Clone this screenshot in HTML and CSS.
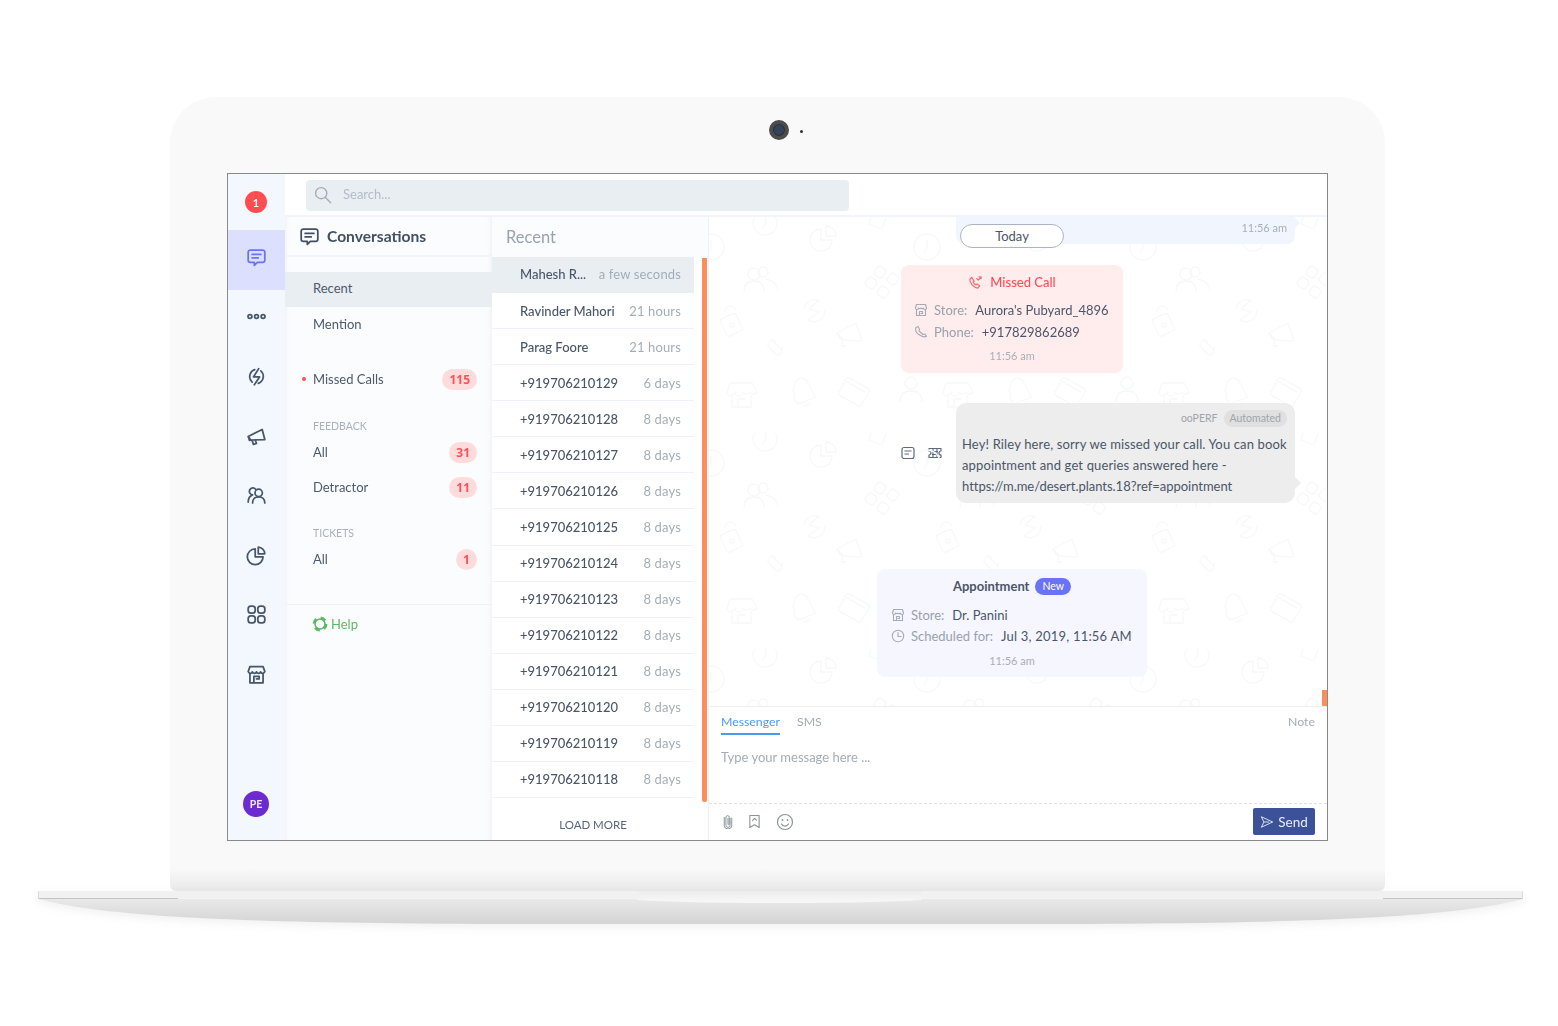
FILE: index.html
```html
<!DOCTYPE html>
<html lang="en">
<head>
<meta charset="utf-8">
<title>Conversations</title>
<link rel="stylesheet" href="styles.css">
</head>
<body>
<div class="laptop">
  <div class="lid">
    <div class="camera-bar"><span class="camera"></span><span class="camera-dot"></span></div>
    <div class="screen">
      <nav class="rail">
        <div class="rail-top"><span class="alert">1</span></div>
        <div class="rail-item active"><svg class="ri" viewBox="0 0 24 24"><path d="M5 3.500h14a2.500 2.500 0 0 1 2.500 2.500v9a2.500 2.500 0 0 1-2.500 2.500h-6l-3.500 3.500v-3.500H5A2.500 2.500 0 0 1 2.500 15V6A2.500 2.500 0 0 1 5 3.500zM7 8.500h10M7 12.500h7"/></svg></div>
        <div class="rail-item"><svg class="ri" viewBox="0 0 24 24"><circle cx="4.500" cy="12" r="2.200"/><circle cx="12" cy="12" r="2.200"/><circle cx="19.500" cy="12" r="2.200"/></svg></div>
        <div class="rail-item"><svg class="ri" viewBox="0 0 24 24"><path d="M7 18.500A8.500 8.500 0 0 1 10 4.200M17 5.500a8.500 8.500 0 0 1-3 14.300M14.500 3l-6 9.500h7l-6 9"/></svg></div>
        <div class="rail-item"><svg class="ri" viewBox="0 0 24 24"><path d="M2.500 12L18.500 4l3 11.500-16 .5zM2.500 12l1.500 4.500 2-.5M7 16.500l1.500 4.500 3.500-1-1.500-4"/></svg></div>
        <div class="rail-item"><svg class="ri" viewBox="0 0 24 24"><circle cx="14.500" cy="9" r="4.200"/><path d="M11 4.800a4 4 0 1 0-3.500 6.500C4.500 12.500 2.500 15.500 2.500 19.500M7.500 20.500c0-4.500 3-7 7-7s7 2.500 7 7"/></svg></div>
        <div class="rail-item"><svg class="ri" viewBox="0 0 24 24"><path d="M10.500 4.500a9 9 0 1 0 9 9h-9zM14 2.500a8 8 0 0 1 7.500 7.500H14z"/></svg></div>
        <div class="rail-item"><svg class="ri" viewBox="0 0 24 24"><rect x="2.500" y="2.500" width="8" height="8" rx="3"/><rect x="13.500" y="2.500" width="8" height="8" rx="3"/><rect x="2.500" y="13.500" width="8" height="8" rx="3"/><rect x="13.500" y="13.500" width="8" height="8" rx="3"/></svg></div>
        <div class="rail-item"><svg class="ri" viewBox="0 0 24 24"><path d="M4.500 3h15l2 5.500a2.500 2.500 0 0 1-4.800.5 2.500 2.500 0 0 1-4.700 0 2.500 2.500 0 0 1-4.700 0 2.500 2.500 0 0 1-4.800-.5zM4.500 11v10.500h15V11M9 21.500V14h6v3h-3"/></svg></div>
        <div class="rail-spacer"></div>
        <span class="avatar">PE</span>
      </nav>
      <div class="workspace">
        <header class="topbar">
          <div class="search">
            <svg class="search-icon" viewBox="0 0 20 20"><circle cx="8" cy="8" r="6.200"/><path d="M12.500 12.500l6 6"/></svg>
            <span class="search-text">Search...</span>
          </div>
        </header>
        <div class="columns">
          <aside class="conv">
            <div class="conv-head">
              <svg class="conv-icon" viewBox="0 0 24 24"><path d="M5 3.500h14a2.500 2.500 0 0 1 2.500 2.500v9a2.500 2.500 0 0 1-2.500 2.500h-6l-3.500 3.500v-3.500H5A2.500 2.500 0 0 1 2.500 15V6A2.500 2.500 0 0 1 5 3.500zM7 8.500h10M7 12.500h7"/></svg>
              <span>Conversations</span>
            </div>
            <div class="nav-group">
              <div class="nav-row selected">Recent</div>
              <div class="nav-row">Mention</div>
            </div>
            <div class="nav-row missed"><span class="red-dot"></span>Missed Calls<span class="count">115</span></div>
            <div class="nav-label">FEEDBACK</div>
            <div class="nav-row">All<span class="count">31</span></div>
            <div class="nav-row">Detractor<span class="count">11</span></div>
            <div class="nav-label tickets">TICKETS</div>
            <div class="nav-row">All<span class="count single">1</span></div>
            <div class="help">
              <svg class="help-icon" viewBox="0 0 16 16"><circle cx="8" cy="8" r="5" /><circle class="help-dash" cx="8" cy="8" r="6"/></svg>
              Help
            </div>
          </aside>
          <section class="recent">
            <div class="recent-inner">
              <div class="recent-head">Recent</div>
              <div class="recent-row current"><span class="who">Mahesh R...</span><span class="ago">a few seconds</span></div>
              <div class="recent-row"><span class="who">Ravinder Mahori</span><span class="ago">21 hours</span></div>
              <div class="recent-row"><span class="who">Parag Foore</span><span class="ago">21 hours</span></div>
              <div class="recent-row"><span class="who">+919706210129</span><span class="ago">6 days</span></div>
              <div class="recent-row"><span class="who">+919706210128</span><span class="ago">8 days</span></div>
              <div class="recent-row"><span class="who">+919706210127</span><span class="ago">8 days</span></div>
              <div class="recent-row"><span class="who">+919706210126</span><span class="ago">8 days</span></div>
              <div class="recent-row"><span class="who">+919706210125</span><span class="ago">8 days</span></div>
              <div class="recent-row"><span class="who">+919706210124</span><span class="ago">8 days</span></div>
              <div class="recent-row"><span class="who">+919706210123</span><span class="ago">8 days</span></div>
              <div class="recent-row"><span class="who">+919706210122</span><span class="ago">8 days</span></div>
              <div class="recent-row"><span class="who">+919706210121</span><span class="ago">8 days</span></div>
              <div class="recent-row"><span class="who">+919706210120</span><span class="ago">8 days</span></div>
              <div class="recent-row"><span class="who">+919706210119</span><span class="ago">8 days</span></div>
              <div class="recent-row"><span class="who">+919706210118</span><span class="ago">8 days</span></div>
              <div class="load-more">LOAD MORE</div>
            </div>
            <div class="thumb"></div>
          </section>
          <main class="chat">
            <div class="thread">
              <svg class="wallpaper" width="100%" height="100%">
                <defs>
                  <pattern id="tile" x="0" y="0" width="216" height="216" patternUnits="userSpaceOnUse">
                    <g class="wp">
                      <circle cx="57" cy="6" r="12"/><path d="M57 0l1 6-3 5"/>
                      <circle cx="219" cy="30" r="13"/><path d="M219 23v8l-3 5"/><circle cx="3" cy="30" r="13"/><path d="M3 23v8l-3 5"/>
                      <path d="M113 12a11 11 0 1 0 11 11h-11zM118 9a10 10 0 0 1 10 10h-10z"/>
                      <path d="M165-6l14 5-5 13-13-5z"/>
                      <circle cx="46" cy="57" r="6"/><circle cx="55" cy="55" r="5"/><path d="M36 75c0-8 4-11 10-11s10 3 10 11M58 62c6 1 10 4 12 10"/>
                      <rect x="167" y="50" width="10" height="10" rx="3" transform="rotate(35 172 55)"/><rect x="158" y="61" width="10" height="10" rx="3" transform="rotate(35 163 66)"/><rect x="180" y="57" width="10" height="10" rx="3" transform="rotate(35 185 62)"/><rect x="170" y="70" width="10" height="10" rx="3" transform="rotate(35 175 75)"/>
                      <path d="M96 92a11 11 0 0 1 14-9M111 83l-10 9 10 3-11 8M100 103a11 11 0 0 0 17-9"/>
                      <rect x="15" y="98" width="17" height="19" rx="2" transform="rotate(-25 24 108)"/><circle cx="24" cy="108" r="2"/><path d="M17 95c0-6 8-8 11-2"/>
                      <path d="M67 124c-4-3-9 2-6 6l6 7c4 3 9-2 6-6M63 121l9 10"/>
                      <path d="M129 116l19-10 6 18-18-1zM129 116l3 6 4 1M134 123v6h4"/>
                      <path d="M22 166h22l5 9a4 4 0 0 1-7 0 4 4 0 0 1-7 0 4 4 0 0 1-8 0 4 4 0 0 1-8 0zM24 178v12h19v-12M30 190v-8h7"/>
                      <path d="M88 164a7 7 0 0 1 12 2l5 10 3 4-18 7-3-4-2-10zM95 188a4 4 0 0 0 6-2"/>
                      <rect x="133" y="165" width="26" height="20" rx="2" transform="rotate(30 146 175)"/><path d="M136 163l21 12"/>
                      <circle cx="203" cy="166" r="6"/><path d="M192 185c0-8 5-11 11-11s11 3 11 11"/>
                    </g>
                  </pattern>
                </defs>
                <rect width="100%" height="100%" fill="url(#tile)"/>
              </svg>
              <div class="bubble-out">
                <span class="today">Today</span>
                <span class="stamp">11:56 am</span>
                <span class="tail tail-blue"></span>
              </div>
              <div class="card missed-card">
                <div class="card-title red">
                  <svg class="mini-red" viewBox="0 0 16 16"><path d="M4 2.500L2 4.500c-.5 4 4 9 8.500 9.500l2-2.500-3-2-1 1C7 10 6 9 5.500 7.500l1-1zM9 3.500l2 2 3-3.500M11.500 2H14v2.500"/></svg>
                  <span>Missed Call</span>
                </div>
                <div class="field">
                  <svg class="mini" viewBox="0 0 14 14"><path d="M2.500 1.500h9l1 3.500a1.500 1.500 0 0 1-3 0 1.500 1.500 0 0 1-2.500 0 1.500 1.500 0 0 1-2.500 0 1.500 1.500 0 0 1-3 0zM2.500 7v5.500h9V7M5.500 12.500V8.500h3v2h-1.500"/></svg>
                  <span class="k">Store:</span><span class="v">Aurora's Pubyard_4896</span>
                </div>
                <div class="field">
                  <svg class="mini" viewBox="0 0 14 14"><path d="M2 2.500c-1 3 1 6 3.500 7.500s5 2.500 7 1.500L11 9 9 9.500 5 6l.5-2-1.500-2.500z"/></svg>
                  <span class="k">Phone:</span><span class="v">+917829862689</span>
                </div>
                <div class="card-time">11:56 am</div>
              </div>
              <div class="auto-row">
                <div class="auto-actions">
                  <svg class="act" viewBox="0 0 14 14"><rect x="1" y="1.500" width="12" height="11" rx="2"/><path d="M3.500 5h7M3.500 8h4.500"/></svg>
                  <svg class="act" viewBox="0 0 14 14"><path d="M1 2.500h12v2.500a2 2 0 0 0 0 4v2.500H1V9a2 2 0 0 0 0-4zM4 5.500h6M4 8.500h6M5 2.500v9M9 2.500v9"/></svg>
                </div>
                <div class="auto-bubble">
                  <div class="auto-meta"><span>ooPERF</span><span class="chip">Automated</span></div>
                  <p class="auto-text">Hey! Riley here, sorry we missed your call. You can book appointment and get queries answered here - <span class="link">https://m.me/desert.plants.18?ref=appointment</span></p>
                  <span class="tail tail-grey"></span>
                </div>
              </div>
              <div class="card appt-card">
                <div class="card-title"><span>Appointment</span><span class="new">New</span></div>
                <div class="field">
                  <svg class="mini" viewBox="0 0 14 14"><path d="M2.500 1.500h9l1 3.500a1.500 1.500 0 0 1-3 0 1.500 1.500 0 0 1-2.500 0 1.500 1.500 0 0 1-2.500 0 1.500 1.500 0 0 1-3 0zM2.500 7v5.500h9V7M5.500 12.500V8.500h3v2h-1.500"/></svg>
                  <span class="k">Store:</span><span class="v">Dr. Panini</span>
                </div>
                <div class="field">
                  <svg class="mini" viewBox="0 0 14 14"><circle cx="7" cy="7" r="5.700"/><path d="M7 3.500V7.500h3"/></svg>
                  <span class="k">Scheduled for:</span><span class="v wide">Jul 3, 2019, 11:56 AM</span>
                </div>
                <div class="card-time">11:56 am</div>
              </div>
              <span class="thumb-end"></span>
            </div>
            <div class="composer">
              <div class="tabs">
                <span class="tab on">Messenger</span>
                <span class="tab">SMS</span>
                <span class="tab note">Note</span>
              </div>
              <div class="typing">Type your message here ...</div>
              <div class="tools">
                <svg class="tool clip" viewBox="0 0 12 18"><path d="M8.500 5v8.500a2.500 2.500 0 0 1-5 0V4a2 2 0 0 1 4 0v8.500a.8.8 0 0 1-1.500 0V5"/><path d="M10.500 5v8.500a4.500 4.500 0 0 1-9 0V4"/></svg>
                <svg class="tool mark" viewBox="0 0 14 16"><path d="M2 1.500h10v13l-5-3-5 3zM5 7l2-2.500 2 2"/></svg>
                <svg class="tool smile" viewBox="0 0 18 18"><circle cx="9" cy="9" r="7.500"/><circle class="eye" cx="6.500" cy="7" r=".9"/><circle class="eye" cx="11.500" cy="7" r=".9"/><path d="M5.500 11a4 4 0 0 0 7 0"/></svg>
                <span class="tools-gap"></span>
                <button class="send" type="button">
                  <svg class="send-icon" viewBox="0 0 16 16"><path d="M1.500 2l13 6-13 6 3-6zM4.500 8h6"/></svg>
                  Send
                </button>
              </div>
            </div>
          </main>
        </div>
      </div>
    </div>
  </div>
  <svg class="base" viewBox="0 0 1485 34" width="1485" height="34">
    <defs>
      <linearGradient id="baseFill" x1="0" y1="0" x2="0" y2="1"><stop offset="0" stop-color="#e9e9e9"/><stop offset="1" stop-color="#d4d4d4"/></linearGradient>
      <linearGradient id="notchFill" x1="0" y1="0" x2="0" y2="1"><stop offset="0" stop-color="#ededed"/><stop offset="1" stop-color="#f8f8f8"/></linearGradient>
    </defs>
    <path d="M0 8C70 26 200 33 520 33h445C1285 33 1415 26 1485 8z" fill="url(#baseFill)"/>
    <rect width="1485" height="7" fill="#f1f1f1"/>
    <rect y="7" width="140" height="1" fill="#c4c4c4"/>
    <rect x="1345" y="7" width="140" height="1" fill="#c4c4c4"/>
    <rect x="0" width="1" height="8" fill="#dddddd"/>
    <rect x="1484" width="1" height="8" fill="#dddddd"/>
    <path d="M599 0h285v9c-60 4-225 4-285 0z" fill="url(#notchFill)"/>
  </svg>
</div>
</body>
</html>
```
FILE: styles.css
```css
* { box-sizing: border-box; }
html, body { margin: 0; padding: 0; background: #fff; }
body { width: 1558px; height: 1026px; overflow: hidden; font-family: "Lato", "Liberation Sans", sans-serif; color: #4a5668; }
svg { display: block; flex: none; }

.laptop { padding-top: 97px; }
.lid {
  width: 1215px; height: 794px; margin-left: 170px; padding: 0 57px;
  border-radius: 46px 46px 6px 6px;
  background: linear-gradient(#f9f9f9 0, #f9f9f9 771px, #e9e9e9 794px);
}
.camera-bar { height: 76px; margin: 0 -57px; padding: 0 0 10px 599px; display: flex; align-items: center; gap: 11px; }
.camera { width: 20px; height: 20px; border-radius: 50%; border: 4px solid #4c4c4c; background: #33445a; box-shadow: inset 0 0 0 1px #2e2e2e; }
.camera-dot { width: 3px; height: 3px; border-radius: 50%; background: #333; margin-top: 3px; }
.base { margin-left: 38px; filter: drop-shadow(0 3px 5px rgba(0,0,0,.06)); overflow: visible; }

.screen { width: 1101px; height: 668px; border: 1px solid #8a8a8a; display: flex; background: #fff; overflow: hidden; }
.rail, .workspace { filter: blur(.3px); }

/* rail */
.rail { width: 57px; flex: none; background: #f3f7fe; display: flex; flex-direction: column; align-items: stretch; }
.rail-top { height: 56px; padding-right: 1px; display: flex; align-items: center; justify-content: center; }
.alert { width: 22px; height: 22px; border-radius: 50%; background: #ff4d52; color: #fff; font-size: 11px; font-weight: 700; display: flex; align-items: center; justify-content: center; }
.rail-item { height: 59.6px; padding: 0 1px 5px 0; display: flex; align-items: center; justify-content: center; }
.rail-item.active { background: #dcdffe; }
.ri { width: 21px; height: 21px; fill: none; stroke: #47566b; stroke-width: 2; stroke-linecap: round; stroke-linejoin: round; }
.active .ri { stroke: #6a73f6; }
.rail-spacer { flex: 1; }
.avatar { width: 26px; height: 26px; margin: 0 0 23px 15px; border-radius: 50%; background: #6b2bd0; color: #f1e8ff; font-size: 10.500px; font-weight: 700; display: flex; align-items: center; justify-content: center; }

/* top */
.workspace { flex: 1; min-width: 0; display: flex; flex-direction: column; }
.topbar { height: 43px; flex: none; padding: 6px 0 0 21px; border-bottom: 2px solid #f1f4f8; }
.search { width: 543px; height: 31px; border-radius: 4px; background: #e9eef2; display: flex; align-items: center; gap: 11px; padding-left: 8px; color: #b4bcc6; font-size: 13px; }
.search-text { padding-bottom: 3px; }
.search-icon { width: 18px; height: 18px; margin-bottom: 2px; fill: none; stroke: #a3abb5; stroke-width: 1.500; stroke-linecap: round; }

.columns { flex: 1; min-height: 0; display: flex; }

/* conversations column */
.conv { width: 207px; flex: none; background: #fbfcfe; box-shadow: inset -5px 0 5px -4px #eceff3, inset 4px 0 4px -3px #eef1f5; display: flex; flex-direction: column; }
.conv-head { height: 40px; flex: none; padding-left: 14px; display: flex; align-items: center; gap: 7px; border-bottom: 2px solid #f1f4f8; font-size: 15.600px; font-weight: 700; color: #434f62; }
.conv-icon { width: 21px; height: 21px; fill: none; stroke: #434f62; stroke-width: 2; stroke-linecap: round; stroke-linejoin: round; }
.nav-group { padding-top: 15px; margin-bottom: 20px; }
.nav-row { height: 35px; padding: 0 15px 2px 28px; display: flex; align-items: center; justify-content: space-between; font-size: 13px; color: #4d5a6c; position: relative; }
.nav-row.selected { background: #e9eef2; padding-bottom: 4px; }
.red-dot { position: absolute; left: 17px; top: 15px; width: 4px; height: 4px; border-radius: 50%; background: #ff4d52; }
.nav-label { height: 18px; margin-top: 20px; padding-left: 28px; font-size: 10.500px; line-height: 18px; color: #a9b1ba; }
.nav-label.tickets { margin-top: 19px; }
.count { min-width: 21px; height: 21px; margin-bottom: -2px; padding: 0 7px; border-radius: 11px; background: #ffdcdc; color: #ff5058; font-size: 12px; font-weight: 700; display: flex; align-items: center; justify-content: center; font-family: "Open Sans", "Lato", sans-serif; }
.count.single { padding: 0; }
.help { margin-top: 27px; height: 38px; padding-left: 27px; border-top: 1px solid #eff1f4; display: flex; align-items: center; gap: 3px; font-size: 13px; color: #5cb865; }
.help-icon { width: 16px; height: 16px; fill: none; stroke: #5cb865; stroke-width: 1.500; }
.help-dash { stroke-width: 3; stroke-dasharray: 5 4.400; }

/* recent column */
.recent { width: 216px; flex: none; display: flex; background: #fff; }
.recent-inner { width: 202px; flex: none; display: flex; flex-direction: column; }
.recent-head { height: 40px; flex: none; margin-right: -14px; padding-left: 14px; display: flex; align-items: center; background: #fbfcfe; font-size: 16.500px; color: #9aa3ad; }
.recent-row { height: 36.070px; flex: none; padding: 0 13px 0 28px; display: flex; align-items: center; justify-content: space-between; border-bottom: 1px solid #eef2f7; font-size: 13px; }
.recent-row.current { background: #e9eef2; border-bottom-color: #e9eef2; padding-bottom: 2px; }
.who { color: #4a5668; font-weight: 500; }
.ago { color: #a4adb6; letter-spacing: .15px; }
.load-more { flex: 1; padding-top: 12px; display: flex; align-items: center; justify-content: center; font-size: 11.500px; color: #59657a; }
.thumb { width: 5px; height: 544px; margin: 41px 0 0 8px; background: #ff8d5c; border-radius: 0 0 2px 2px; }

/* chat */
.chat { flex: 1; min-width: 0; display: flex; flex-direction: column; border-left: 1px solid #eef1f5; }
.thread { height: 489px; flex: none; position: relative; overflow: hidden; background: #fff; }
.wallpaper { position: absolute; left: -1px; top: 0; }
.wp { fill: none; stroke: #f7f8f9; stroke-width: 1.300; stroke-linecap: round; stroke-linejoin: round; }
.bubble-out { position: relative; width: 339px; height: 27px; margin-left: 247px; background: #f1f6fe; border-radius: 0 0 8px 8px; }
.today { position: absolute; left: 4px; top: 7px; width: 104px; height: 24px; border: 1.500px solid #abb4c0; border-radius: 12px; background: #fff; display: flex; align-items: center; justify-content: center; font-size: 13px; color: #4a5668; z-index: 1; }
.stamp { position: absolute; right: 8px; top: 4px; font-size: 11px; color: #a9b0b9; }
.tail { position: absolute; width: 0; height: 0; border-style: solid; border-width: 6px 0 6px 6px; border-color: transparent; }
.tail-blue { right: -5px; top: 0; border-left-color: #f1f6fe; }
.tail-grey { right: -6px; top: 74px; border-left-color: #ededed; }

.card { position: relative; border-radius: 8px; display: flex; flex-direction: column; height: 108px; }
.missed-card { width: 222px; margin: 21px 0 0 192px; background: #ffeded; padding: 8px 13px 0; }
.appt-card { width: 270px; margin: 66px 0 0 168px; background: #f5f6ff; padding: 8px 14px 0; }
.card-title { height: 18px; display: flex; align-items: center; justify-content: center; gap: 7px; font-size: 13px; font-weight: 500; color: #4a5668; }
.appt-card .card-title { font-weight: 700; }
.card-title.red { color: #ff4d55; }
.mini-red { width: 15px; height: 15px; fill: none; stroke: #ff6a70; stroke-width: 1.300; stroke-linejoin: round; }
.field { height: 22px; display: flex; align-items: center; font-size: 13px; white-space: nowrap; }
.appt-card .field { height: 21px; }
.missed-card .field:nth-child(2) { margin-top: 8px; }
.appt-card .field:nth-child(2) { margin-top: 9px; }
.mini { width: 14px; height: 14px; margin-right: 6px; fill: none; stroke: #a6aab4; stroke-width: 1.100; stroke-linejoin: round; stroke-linecap: round; }
.k { color: #9aa1ab; margin-right: 8px; }
.v { color: #4a5668; }
.v.wide { letter-spacing: .2px; }
.card-time { margin-top: 2px; height: 20px; display: flex; align-items: center; justify-content: center; font-size: 11px; color: #a9aeb8; }
.appt-card .card-time { margin-top: 4px; }

.auto-row { margin: 30px 0 0 192px; display: flex; align-items: center; }
.auto-actions { width: 55px; flex: none; display: flex; gap: 13px; }
.act { width: 14px; height: 14px; fill: none; stroke: #5d6a7c; stroke-width: 1.200; stroke-linejoin: round; }
.auto-bubble { position: relative; width: 339px; height: 100px; border-radius: 10px; background: #ededed; padding: 6px 8px 0 6px; }
.auto-meta { height: 18px; display: flex; justify-content: flex-end; align-items: center; gap: 6px; font-size: 10.500px; color: #a0a4aa; }
.chip { height: 17px; padding: 0 6px; border-radius: 9px; background: #e0e0e0; display: flex; align-items: center; }
.auto-text { margin: 7px 0 0; font-size: 13px; line-height: 21px; color: #4a5668; letter-spacing: .14px; }
.link { letter-spacing: -.02px; }
.new { height: 17px; padding: 0 7px; margin-left: -1px; border-radius: 9px; background: #6a73f6; color: #fff; font-size: 10.500px; font-weight: 400; display: flex; align-items: center; }
.thumb-end { position: absolute; right: 0; bottom: 0; width: 5px; height: 16px; background: #ff8d5c; }

/* composer */
.composer { flex: 1; min-height: 0; display: flex; flex-direction: column; border-top: 1px solid #eceef1; background: #fff; }
.tabs { height: 28px; flex: none; padding: 0 12px; display: flex; gap: 17px; align-items: flex-start; font-size: 12.300px; color: #a4acb6; }
.tab { height: 28px; line-height: 29px; }
.tab.on { color: #4a9bf0; border-bottom: 2px solid #4a9bf0; }
.tab.note { margin-left: auto; }
.typing { flex: 1; padding: 14px 0 0 12px; font-size: 13px; color: #a4acb6; }
.tools { height: 37px; flex: none; border-top: 1px dashed #dfe1e4; padding: 0 12px 1px 14px; display: flex; align-items: center; }
.tool { fill: none; stroke: #8d939b; stroke-width: 1.200; stroke-linecap: round; stroke-linejoin: round; }
.clip { width: 10px; height: 15px; margin-right: 15px; }
.mark { width: 13px; height: 15px; margin-right: 15px; }
.smile { width: 18px; height: 18px; }
.eye { fill: #8d939b; stroke: none; }
.tools-gap { flex: 1; }
.send { width: 62px; height: 27px; border: 0; border-radius: 2px; background: #3b5299; color: #e8ecf7; font-family: inherit; font-size: 13.500px; display: flex; align-items: center; justify-content: center; gap: 4px; padding: 0; }
.send-icon { width: 14px; height: 14px; fill: none; stroke: #dfe5f3; stroke-width: 1.100; stroke-linejoin: round; }
```
